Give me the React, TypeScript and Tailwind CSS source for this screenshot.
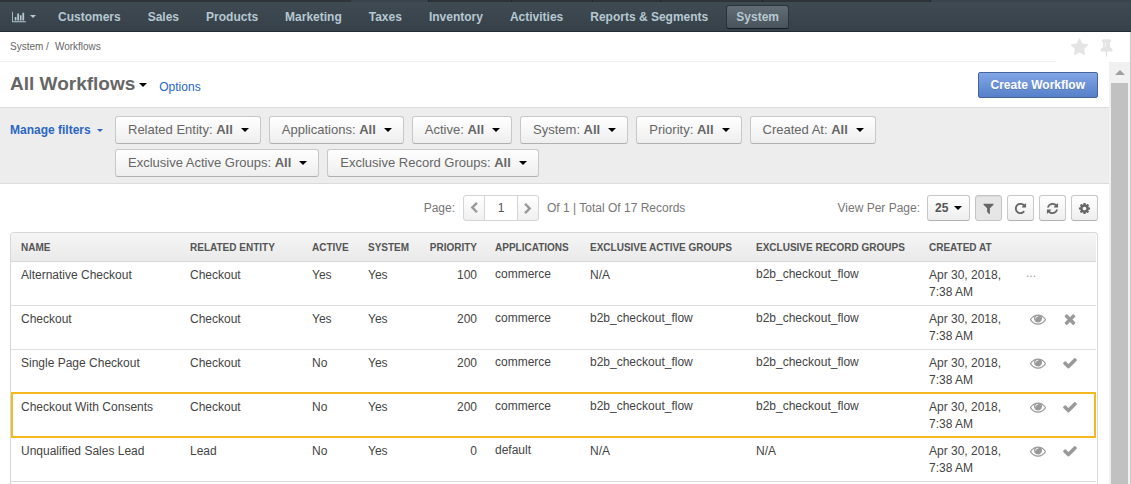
import React from "react";

const PATHS = {
  eye: "M1664 960q-152-236-381-353 61 104 61 225 0 185-131.5 316.5t-316.5 131.5-316.5-131.5-131.5-316.5q0-121 61-225-229 117-381 353 133 205 333.5 326.5t434.5 121.5 434.5-121.5 333.5-326.5zm-720-384q0-20-14-34t-34-14q-125 0-214.5 89.5t-89.5 214.5q0 20 14 34t34 14 34-14 14-34q0-86 61-147t147-61q20 0 34-14t14-34zm848 384q0 34-20 69-140 230-376.5 368.5t-499.5 138.5-499.5-139-376.5-368q-20-35-20-69t20-69q140-229 376.5-368t499.5-139 499.5 139 376.5 368q20 35 20 69z",
  check: "M1671 566q0 40-28 68l-724 724-136 136q-28 28-68 28t-68-28l-136-136-362-362q-28-28-28-68t28-68l136-136q28-28 68-28t68 28l294 295 656-657q28-28 68-28t68 28l136 136q28 28 28 68z",
  times: "M1490 1322q0 40-28 68l-136 136q-28 28-68 28t-68-28l-294-294-294 294q-28 28-68 28t-68-28l-136-136q-28-28-28-68t28-68l294-294-294-294q-28-28-28-68t28-68l136-136q28-28 68-28t68 28l294 294 294-294q28-28 68-28t68 28l136 136q28 28 28 68t-28 68l-294 294 294 294q28 28 28 68z",
  filter: "M1595 295q17 41-14 70l-493 493v742q0 42-39 59-13 5-25 5-27 0-45-19l-256-256q-19-19-19-45v-486l-493-493q-31-29-14-70 17-39 59-39h1280q42 0 59 39z",
  repeat: "M1664 256v448q0 26-19 45t-45 19h-448q-42 0-59-40-17-39 14-69l138-138q-148-137-349-137-104 0-198.5 40.5t-163.5 109.5-109.5 163.5-40.5 198.5 40.5 198.5 109.5 163.5 163.5 109.5 198.5 40.5q119 0 225-52t179-147q7-10 23-12 15 0 25 9l137 138q9 8 9.5 20.5t-7.5 22.5q-109 132-264 204.5t-327 72.5q-156 0-298-61t-245-164-164-245-61-298 61-298 164-245 245-164 298-61q147 0 284.5 55.5t244.5 156.5l130-129q29-31 70-14 39 17 39 59z",
  refresh: "M1639 1056q0 5-1 7-64 268-268 434.5t-478 166.5q-146 0-282.5-55t-243.5-157l-129 129q-19 19-45 19t-45-19-19-45v-448q0-26 19-45t45-19h448q26 0 45 19t19 45-19 45l-137 137q71 66 161 102t187 36q134 0 250-65t186-179q11-17 53-117 8-23 30-23h192q13 0 22.5 9.5t9.5 22.5zm25-800v448q0 26-19 45t-45 19h-448q-26 0-45-19t-19-45 19-45l138-138q-148-137-349-137-134 0-250 65t-186 179q-11 17-53 117-8 23-30 23h-199q-13 0-22.5-9.5t-9.5-22.5v-7q65-268 270-434.5t480-166.5q146 0 284 55.5t245 156.5l130-129q19-19 45-19t45 19 19 45z",
  cog: "M1152 896q0-106-75-181t-181-75-181 75-75 181 75 181 181 75 181-75 75-181zm512-109v222q0 12-8 23t-20 13l-185 28q-19 54-39 91 35 50 107 138 10 12 10 25t-9 23q-27 37-99 108t-94 71q-12 0-26-9l-138-108q-44 23-91 38-16 136-29 186-7 28-36 28h-222q-14 0-24.5-8.5t-11.5-21.5l-28-184q-49-16-90-37l-141 107q-10 9-25 9-14 0-25-11-126-114-165-168-7-10-7-23 0-12 8-23 15-21 51-66.5t54-70.5q-27-50-41-99l-183-27q-13-2-21-12.5t-8-23.5v-222q0-12 8-23t19-13l186-28q14-46 39-92-40-57-107-138-10-12-10-24 0-10 9-23 26-36 98.5-107.5t94.5-71.5q13 0 26 10l138 107q44-23 91-38 16-136 29-186 7-28 36-28h222q14 0 24.5 8.5t11.5 21.5l28 184q49 16 90 37l142-107q9-9 24-9 13 0 25 10 129 119 165 170 7 8 7 22 0 12-8 23-15 21-51 66.5t-54 70.5q26 50 41 98l183 28q13 2 21 12.5t8 23.5z",
  star: "M1728 647q0 22-26 48l-363 354 86 500q1 7 1 20 0 21-10.5 35.5t-30.5 14.5q-19 0-40-12l-449-236-449 236q-22 12-40 12-21 0-31.5-14.5t-10.5-35.5q0-6 2-20l86-500-364-354q-25-27-25-48 0-37 56-46l502-73 225-455q19-41 49-41t49 41l225 455 502 73q56 9 56 46z",
  pin: "M800 864v-448q0-14-9-23t-23-9-23 9-9 23v448q0 14 9 23t23 9 23-9 9-23zm672 352q0 26-19 45t-45 19h-429l-51 483q-2 12-10.5 20.5t-20.5 8.5h-1q-27 0-32-27l-76-485h-404q-26 0-45-19t-19-45q0-123 78.5-221.5t177.5-98.5v-512q-52 0-90-38t-38-90 38-90 90-38h640q52 0 90 38t38 90-38 90-90 38v512q99 0 177.5 98.5t78.5 221.5z",
  left: "M1427 301l-531 531 531 531q19 19 19 45t-19 45l-166 166q-19 19-45 19t-45-19l-742-742q-19-19-19-45t19-45l742-742q19-19 45-19t45 19l166 166q19 19 19 45t-19 45z",
};

type IconName = keyof typeof PATHS;

function Icon({ name, className }: { name: IconName; className: string }) {
  return (
    <svg viewBox="0 0 1792 1792" className={className} fill="currentColor" aria-hidden="true">
      <path d={PATHS[name]} />
    </svg>
  );
}

function Caret({ className = "h-1 w-2" }: { className?: string }) {
  return (
    <svg viewBox="0 0 8 4" className={`shrink-0 ${className}`} fill="currentColor" aria-hidden="true">
      <path d="M0 0h8L4 4z" />
    </svg>
  );
}

function BarChart() {
  return (
    <svg viewBox="0 0 2048 1792" className="h-3 w-3.5" fill="currentColor" aria-hidden="true">
      <path d="M640 896v512h-256v-512h256zm384-512v1024h-256v-1024h256zm1024 1152v128h-2048v-1536h128v1408h1920zm-640-896v768h-256v-768h256zm384-384v1152h-256v-1152h256z" />
    </svg>
  );
}

const navItems = [
  "Customers",
  "Sales",
  "Products",
  "Marketing",
  "Taxes",
  "Inventory",
  "Activities",
  "Reports & Segments",
  "System",
];

const filters = [
  "Related Entity",
  "Applications",
  "Active",
  "System",
  "Priority",
  "Created At",
  "Exclusive Active Groups",
  "Exclusive Record Groups",
];

const columns = [
  { label: "Name", width: "" },
  { label: "Related Entity", width: "w-[122px]" },
  { label: "Active", width: "w-[56px]" },
  { label: "System", width: "w-[61px]" },
  { label: "Priority", width: "w-[66px]", right: true },
  { label: "Applications", width: "w-[95px]" },
  { label: "Exclusive Active Groups", width: "w-[166px]" },
  { label: "Exclusive Record Groups", width: "w-[173px]" },
  { label: "Created At", width: "w-[97px]" },
];

interface Workflow {
  name: string;
  entity: string;
  active: boolean;
  priority: number;
  application: string;
  activeGroup?: string;
  recordGroup?: string;
  action: "more" | "times" | "check";
  highlighted?: boolean;
}

const workflows: Workflow[] = [
  { name: "Alternative Checkout", entity: "Checkout", active: true, priority: 100, application: "commerce", recordGroup: "b2b_checkout_flow", action: "more" },
  { name: "Checkout", entity: "Checkout", active: true, priority: 200, application: "commerce", activeGroup: "b2b_checkout_flow", recordGroup: "b2b_checkout_flow", action: "times" },
  { name: "Single Page Checkout", entity: "Checkout", active: false, priority: 200, application: "commerce", activeGroup: "b2b_checkout_flow", recordGroup: "b2b_checkout_flow", action: "check" },
  { name: "Checkout With Consents", entity: "Checkout", active: false, priority: 200, application: "commerce", activeGroup: "b2b_checkout_flow", recordGroup: "b2b_checkout_flow", action: "check", highlighted: true },
  { name: "Unqualified Sales Lead", entity: "Lead", active: false, priority: 0, application: "default", action: "check" },
];

const cell = "border-b border-[#ddd] pr-2 pl-2.5 pt-[5px] pb-1 align-top";
const button =
  "rounded-[3px] border border-[#c8c8c8] border-b-[#b0b0b0] bg-linear-to-b from-white to-[#eeeeee]";

function ListValue({ value }: { value?: string }) {
  if (!value) return <>N/A</>;
  return (
    <ul className="leading-[15px]">
      <li>{value}</li>
    </ul>
  );
}

function TopStrip() {
  return (
    <div className="flex h-0.5 bg-[#3a444c]">
      <div className="w-[351px] bg-[#2e343a]" />
      <div className="w-[77px]" />
      <div className="w-[83px] border-l border-[#1e2429] bg-[#2e343a]" />
      <div className="w-[81px] border-l border-[#1e2429] bg-[#2e343a]" />
      <div className="w-[68px] border-l border-[#1e2429] bg-[#2e343a]" />
      <div className="w-[102px] border-l border-[#1e2429] bg-[#2e343a]" />
      <div className="w-[169px] border-x border-[#1e2429] bg-[#2e343a]" />
    </div>
  );
}

function MainNav() {
  return (
    <header>
      <TopStrip />
      <nav className="flex h-[30px] items-center border-b border-[#222c36] bg-linear-to-b from-[#404a52] to-[#36414a] pl-3 text-[12px] font-bold text-[#b6c8d1]">
        <button type="button" aria-label="Dashboards" className="mr-3 flex items-center gap-1">
          <BarChart />
          <Caret className="h-[3px] w-1.5" />
        </button>
        <ul className="flex gap-[7px]">
          {navItems.map((item) => (
            <li key={item}>
              <a
                href="#"
                className={
                  item === "System"
                    ? "ml-px block rounded-[3px] border border-[#29323a] border-b-[#161c22] bg-linear-to-b from-[#616c75] to-[#48535b] px-[9px] leading-[22px] whitespace-nowrap"
                    : "block border border-transparent px-[9px] leading-[22px] whitespace-nowrap"
                }
              >
                {item}
              </a>
            </li>
          ))}
        </ul>
      </nav>
    </header>
  );
}

function Breadcrumbs() {
  return (
    <div className="flex h-[30px] shrink-0 border-r border-[#c8c8c8]">
      <nav className="flex flex-1 items-center gap-1.5 border-b border-[#f0f0f0] pl-2.5 text-[10px] text-[#666]">
        <span>System /</span>
        <a href="#">Workflows</a>
      </nav>
      <div className="flex items-center gap-2 px-3.5 text-[#e4e4e4]">
        <button type="button" aria-label="Add to favorites">
          <Icon name="star" className="size-[19px]" />
        </button>
        <button type="button" aria-label="Pin page">
          <Icon name="pin" className="size-[19px]" />
        </button>
      </div>
    </div>
  );
}

function TitleBar() {
  return (
    <div className="flex h-[46px] items-center border-b border-[#dcdcdc] pr-[11px] pl-2.5">
      <h1 className="text-[19px] font-bold text-[#666]">
        <button type="button" className="flex items-center gap-1">
          All Workflows
          <Caret className="h-1 w-2 text-black" />
        </button>
      </h1>
      <a href="#" className="mt-1 ml-3 text-[12px] text-[#1d66c9]">
        Options
      </a>
      <button
        type="button"
        className="ml-auto h-[26px] rounded-[2px] border border-[#46639a] bg-linear-to-b from-[#82a6e6] to-[#5680c9] px-3 text-[12px] font-bold text-white text-shadow-2xs"
      >
        Create Workflow
      </button>
    </div>
  );
}

function Filters() {
  return (
    <div className="flex border-b border-[#dcdcdc] bg-[#ededed] pt-2 pb-1.5 pl-2.5 text-[#666]">
      <button
        type="button"
        className="flex h-7 w-[105px] shrink-0 items-center gap-1.5 text-[12px] font-bold text-[#2a67c4]"
      >
        Manage filters
        <Caret className="h-[3px] w-1.5" />
      </button>
      <ul className="flex max-w-[780px] flex-wrap gap-x-2 gap-y-[5px]">
        {filters.map((label) => (
          <li key={label}>
            <button type="button" className={`flex h-7 items-center pr-[11px] pl-3 text-[13px] ${button}`}>
              {label}:&nbsp;<b>All</b>
              <Caret className="ml-2 h-1 w-2 text-black" />
            </button>
          </li>
        ))}
      </ul>
    </div>
  );
}

const tools: { name: IconName; label: string }[] = [
  { name: "filter", label: "Toggle filters" },
  { name: "repeat", label: "Reset" },
  { name: "refresh", label: "Refresh" },
  { name: "cog", label: "Grid settings" },
];

function Toolbar() {
  return (
    <div className="grid h-12 grid-cols-[1fr_auto_1fr] items-center px-[11px] text-[12px] text-[#777]">
      <div className="col-start-2 flex items-center">
        <label htmlFor="page">Page:</label>
        <div className="mx-2 flex h-[26px] rounded-[3px] border border-[#d5d5d5] bg-linear-to-b from-white to-[#f0f0f0] text-[#999]">
          <button type="button" aria-label="Previous page" className="flex w-5 items-center justify-center">
            <Icon name="left" className="size-3" />
          </button>
          <input
            id="page"
            defaultValue="1"
            className="w-[34px] border-x border-[#d5d5d5] bg-white text-center text-[#555]"
          />
          <button type="button" aria-label="Next page" className="flex w-5 items-center justify-center">
            <Icon name="left" className="size-3 rotate-180" />
          </button>
        </div>
        <span>Of 1 | Total Of 17 Records</span>
      </div>
      <div className="flex items-center justify-end gap-[5px]">
        <label htmlFor="per-page" className="mr-0.5">
          View Per Page:
        </label>
        <div className="relative">
          <select
            id="per-page"
            defaultValue="25"
            className={`block h-[26px] w-[43px] appearance-none pl-[7px] text-[12px] font-bold text-[#555] ${button}`}
          >
            <option>10</option>
            <option>25</option>
            <option>50</option>
            <option>100</option>
          </select>
          <span className="pointer-events-none absolute inset-y-0 right-2 flex items-center text-black">
            <Caret />
          </span>
        </div>
        {tools.map(({ name, label }) => (
          <button
            key={name}
            type="button"
            aria-label={label}
            className={
              name === "filter"
                ? "flex h-[26px] w-[27px] items-center justify-center rounded-[3px] border border-[#c4c4c4] bg-[#e6e6e6] text-[#666] inset-shadow-xs"
                : `flex h-[26px] w-[27px] items-center justify-center text-[#666] ${button}`
            }
          >
            <Icon name={name} className="size-[13px]" />
          </button>
        ))}
      </div>
    </div>
  );
}

function Row({ w }: { w: Workflow }) {
  return (
    <tr className="relative">
      <td className={cell}>
        {w.name}
        {w.highlighted && (
          <span className="pointer-events-none absolute inset-x-0 -top-0.5 bottom-0 border-2 border-[#f5b91e]" />
        )}
      </td>
      <td className={cell}>{w.entity}</td>
      <td className={cell}>{w.active ? "Yes" : "No"}</td>
      <td className={cell}>Yes</td>
      <td className={`text-right ${cell}`}>{w.priority}</td>
      <td className={cell}>
        <ListValue value={w.application} />
      </td>
      <td className={cell}>
        <ListValue value={w.activeGroup} />
      </td>
      <td className={cell}>
        <ListValue value={w.recordGroup} />
      </td>
      <td className={cell}>
        Apr 30, 2018,
        <br />
        7:38 AM
      </td>
      <td className={cell}>
        {w.action === "more" ? (
          <button type="button" aria-label="More actions" className="block leading-3 text-[#999]">
            ...
          </button>
        ) : (
          <div className="flex gap-4 pl-1 text-[#999]">
            <button type="button" aria-label="View">
              <Icon name="eye" className="size-4" />
            </button>
            <button type="button" aria-label={w.action === "times" ? "Deactivate" : "Activate"}>
              <Icon name={w.action} className="size-4" />
            </button>
          </div>
        )}
      </td>
    </tr>
  );
}

function Grid() {
  return (
    <div className="mr-[11px] ml-2.5 flex-1 overflow-hidden rounded-t-[4px] border border-b-0 border-[#d8d8d8] pr-px">
      <table className="w-full table-fixed border-separate border-spacing-0 text-left text-[12px] leading-[17px] text-[#444]">
        <thead>
          <tr>
            {columns.map((c) => (
              <th
                key={c.label}
                className={`h-[29px] border-b border-[#d8d8d8] bg-linear-to-b from-[#f5f5f5] to-[#eaeaea] pr-2 pl-2.5 text-[10px] font-bold whitespace-nowrap text-[#555] uppercase ${c.width} ${c.right ? "text-right" : ""}`}
              >
                {c.label}
              </th>
            ))}
            <th
              aria-label="Actions"
              className="w-[80px] border-b border-[#d8d8d8] bg-linear-to-b from-[#f5f5f5] to-[#eaeaea]"
            />
          </tr>
        </thead>
        <tbody>
          {workflows.map((w) => (
            <Row key={w.name} w={w} />
          ))}
        </tbody>
      </table>
    </div>
  );
}

function ScrollTrack() {
  return (
    <div className="flex w-[22px] flex-col border-r border-[#c8c8c8] bg-[#f1f1f1]" aria-hidden="true">
      <div className="flex h-[21px] shrink-0 items-center justify-center text-[#a0a0a0]">
        <Caret className="h-[5px] w-2.5 rotate-180" />
      </div>
      <div className="mx-0.5 flex-1 bg-[#c1c1c1]" />
    </div>
  );
}

export default function App() {
  return (
    <div className="flex h-screen flex-col overflow-hidden bg-white font-['Liberation_Sans',Arial,sans-serif]">
      <MainNav />
      <Breadcrumbs />
      <div className="flex min-h-0 flex-1">
        <main className="flex min-w-0 flex-1 flex-col">
          <TitleBar />
          <Filters />
          <Toolbar />
          <Grid />
        </main>
        <ScrollTrack />
      </div>
    </div>
  );
}
